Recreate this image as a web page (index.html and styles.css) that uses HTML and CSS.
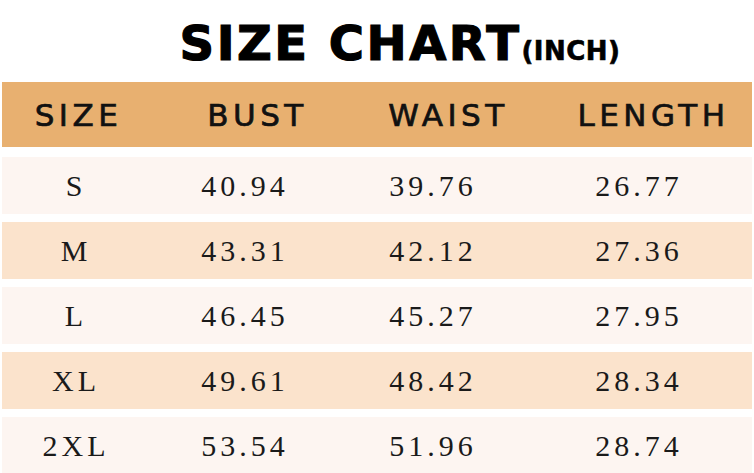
FILE: index.html
```html
<!DOCTYPE html>
<html>
<head>
<meta charset="utf-8">
<link rel="stylesheet" href="styles.css">
</head>
<body>
<div class="chart">
  <h1 class="title"><span class="big">SIZE CHART</span><span class="small">(INCH)</span></h1>
  <div class="head">
    <div class="hc h1">SIZE</div>
    <div class="hc h2">BUST</div>
    <div class="hc h3">WAIST</div>
    <div class="hc h4">LENGTH</div>
  </div>
  <div class="row light"><div>S</div><div>40.94</div><div>39.76</div><div>26.77</div></div>
  <div class="row peach"><div>M</div><div>43.31</div><div>42.12</div><div>27.36</div></div>
  <div class="row light"><div>L</div><div>46.45</div><div>45.27</div><div>27.95</div></div>
  <div class="row peach"><div>XL</div><div>49.61</div><div>48.42</div><div>28.34</div></div>
  <div class="row light"><div>2XL</div><div>53.54</div><div>51.96</div><div>28.74</div></div>
</div>
</body>
</html>
```
FILE: styles.css
```css
html, body {
  margin: 0;
  padding: 0;
  background: #ffffff;
}
.chart {
  width: 754px;
  height: 473px;
  overflow: hidden;
  padding: 0 2px;
  box-sizing: border-box;
}
.title {
  margin: 0;
  height: 82px;
  display: flex;
  justify-content: center;
  align-items: baseline;
  padding-top: 19px;
  padding-left: 46px;
  box-sizing: border-box;
  font-family: "DejaVu Sans", sans-serif;
  font-weight: bold;
  color: #000;
  line-height: 1;
}
.big {
  font-size: 48px;
  letter-spacing: 2.5px;
  -webkit-text-stroke: 1.2px #000;
}
.small {
  font-size: 26px;
  letter-spacing: 0.5px;
  -webkit-text-stroke: 0.6px #000;
}
.head {
  height: 65px;
  background: #e8b070;
  display: grid;
  grid-template-columns: 148px 210px 172px 220px;
  align-items: center;
  font-family: "DejaVu Sans", sans-serif;
  font-size: 31px;
  letter-spacing: 4.5px;
  color: #111;
  -webkit-text-stroke: 0.7px #111;
  margin-bottom: 10px;
}
.hc {
  text-align: center;
  padding-left: 5px;
}
.h4 {
  padding-left: 23px;
}
.row {
  height: 57px;
  display: grid;
  grid-template-columns: 144px 194px 182px 230px;
  align-items: center;
  font-family: "Liberation Serif", serif;
  font-size: 30px;
  letter-spacing: 4px;
  color: #1a1a1a;
  margin-bottom: 8px;
}
.row > div {
  text-align: center;
  padding-left: 4px;
}
.light {
  background: #fdf5f1;
}
.peach {
  background: #fbe3cc;
}
```
